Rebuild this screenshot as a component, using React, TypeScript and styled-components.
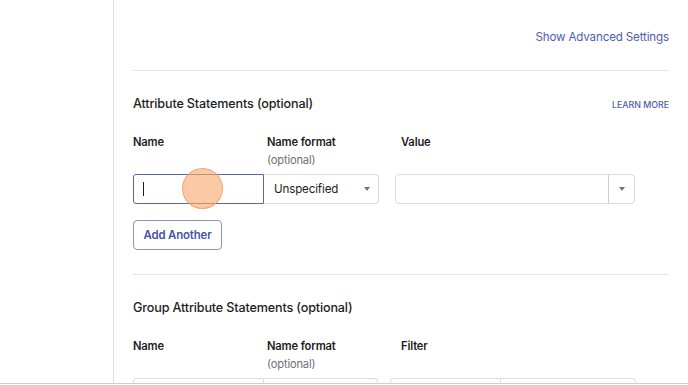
import React from 'react'
import styled, { createGlobalStyle } from 'styled-components'

const GlobalStyle = createGlobalStyle`
    html, body {
        margin: 0;
        padding: 0;
        background: #ffffff;
    }
    body {
        font-family: Inter, 'Liberation Sans', sans-serif;
        color: #1d1d21;
        letter-spacing: -0.15px;
    }
`

const App = () => {
    return (
        <>
            <GlobalStyle />
            <Page>
                <Sidebar />
                <Main>
                    <AdvancedRow>
                        <LinkText>Show Advanced Settings</LinkText>
                    </AdvancedRow>

                    <Section>
                        <TitleRow>
                            <Title>Attribute Statements (optional)</Title>
                            <LearnMore>LEARN MORE</LearnMore>
                        </TitleRow>
                        <LabelRow>
                            <Label>Name</Label>
                            <div>
                                <Label>Name format</Label>
                                <Hint>(optional)</Hint>
                            </div>
                            <Label>Value</Label>
                        </LabelRow>
                        <InputRow>
                            <Pair>
                                <TextInput $focused $w={131}>
                                    <Caret />
                                    <Touch />
                                </TextInput>
                                <Select $w={115}>
                                    <span>Unspecified</span>
                                    <Arrow />
                                </Select>
                            </Pair>
                            <Combo $w={240} $gap={16}>
                                <ComboField />
                                <ComboToggle>
                                    <Arrow />
                                </ComboToggle>
                            </Combo>
                        </InputRow>
                        <AddButton>Add Another</AddButton>
                    </Section>

                    <Section>
                        <TitleRow>
                            <Title>Group Attribute Statements (optional)</Title>
                        </TitleRow>
                        <LabelRow>
                            <Label>Name</Label>
                            <div>
                                <Label>Name format</Label>
                                <Hint>(optional)</Hint>
                            </div>
                            <Label>Filter</Label>
                        </LabelRow>
                        <InputRow>
                            <Pair>
                                <TextInput $w={131} />
                                <Select $w={114} />
                            </Pair>
                            <Pair $gap={12}>
                                <TextInput $w={111} />
                                <Select $w={135} />
                            </Pair>
                        </InputRow>
                    </Section>
                </Main>
            </Page>
        </>
    )
}

// Page

const Page = styled.div`
    display: flex;
    height: 383px;
    overflow: hidden;
    border-bottom: 1px solid #cfcfd2;
`

const Sidebar = styled.div`
    width: 113px;
    flex-shrink: 0;
    border-right: 1px solid #dcdcdf;
`

const Main = styled.div`
    flex: 1;
    padding: 0 19px;
    min-width: 0;
`

// Top

const AdvancedRow = styled.div`
    height: 71px;
    box-sizing: border-box;
    padding-top: 29px;
    display: flex;
    justify-content: flex-end;
    align-items: flex-start;
    border-bottom: 1px solid #e6e6e8;
`

const LinkText = styled.span`
    font-size: 11.6px;
    line-height: 16px;
    color: #4c5eae;
`

// Sections

const Section = styled.div`
    padding-top: 24px;
    padding-bottom: 24px;
    border-bottom: 1px solid #e6e6e8;
`

const TitleRow = styled.div`
    display: flex;
    justify-content: space-between;
    align-items: center;
    height: 18px;
`

const Title = styled.div`
    font-size: 12.6px;
    font-weight: 500;
    line-height: 18px;
`

const LearnMore = styled.span`
    font-size: 8.8px;
    font-weight: 500;
    letter-spacing: 0;
    color: #4c5eae;
`

const LabelRow = styled.div`
    display: grid;
    grid-template-columns: 134px 134px auto;
    margin-top: 20px;
`

const Label = styled.div`
    font-size: 11.2px;
    font-weight: 600;
    line-height: 18px;
`

const Hint = styled.div`
    font-size: 11.1px;
    line-height: 18px;
    color: #6e6e78;
`

const InputRow = styled.div`
    display: flex;
    margin-top: 5px;
`

const Pair = styled.div<{ $gap?: number }>`
    display: flex;
    margin-left: ${p => p.$gap || 0}px;
`

const TextInput = styled.div<{ $w: number, $focused?: boolean }>`
    position: relative;
    width: ${p => p.$w}px;
    height: 30px;
    box-sizing: border-box;
    border: 1px solid ${p => p.$focused ? '#5867a6' : '#dcdce0'};
    border-radius: 3px 0 0 3px;
    display: flex;
    align-items: center;
    padding-left: 9px;
`

const Caret = styled.span`
    width: 1px;
    height: 14px;
    background: #1d1d21;
`

const Touch = styled.span`
    position: absolute;
    left: 48px;
    top: -7px;
    width: 41px;
    height: 41px;
    box-sizing: border-box;
    border-radius: 50%;
    background: rgba(249, 170, 110, 0.62);
    border: 1.5px solid rgba(236, 150, 90, 0.75);
`

const Select = styled.div<{ $w: number }>`
    width: ${p => p.$w}px;
    height: 30px;
    box-sizing: border-box;
    border: 1px solid #dcdce0;
    border-left: none;
    border-radius: 0 4px 4px 0;
    display: flex;
    align-items: center;
    justify-content: space-between;
    padding: 0 8px 0 10px;
    font-size: 11.6px;
    color: #1d1d21;
`

const Arrow = styled.span`
    width: 0;
    height: 0;
    border-left: 3px solid transparent;
    border-right: 3px solid transparent;
    border-top: 4px solid #74747c;
`

const Combo = styled.div<{ $w: number, $gap: number }>`
    display: flex;
    width: ${p => p.$w}px;
    height: 30px;
    box-sizing: border-box;
    margin-left: ${p => p.$gap}px;
    border: 1px solid #dcdce0;
    border-radius: 4px;
`

const ComboField = styled.div`
    flex: 1;
    border-right: 1px solid #d0d0d4;
`

const ComboToggle = styled.div`
    width: 25px;
    display: flex;
    align-items: center;
    justify-content: center;
`

const AddButton = styled.button`
    display: block;
    margin-top: 16px;
    height: 30px;
    width: 89px;
    padding: 0;
    background: #ffffff;
    border: 1px solid #8a93c2;
    border-radius: 4px;
    font-family: Inter, 'Liberation Sans', sans-serif;
    font-size: 11.4px;
    font-weight: 600;
    letter-spacing: -0.15px;
    color: #4455a8;
`

export default App
